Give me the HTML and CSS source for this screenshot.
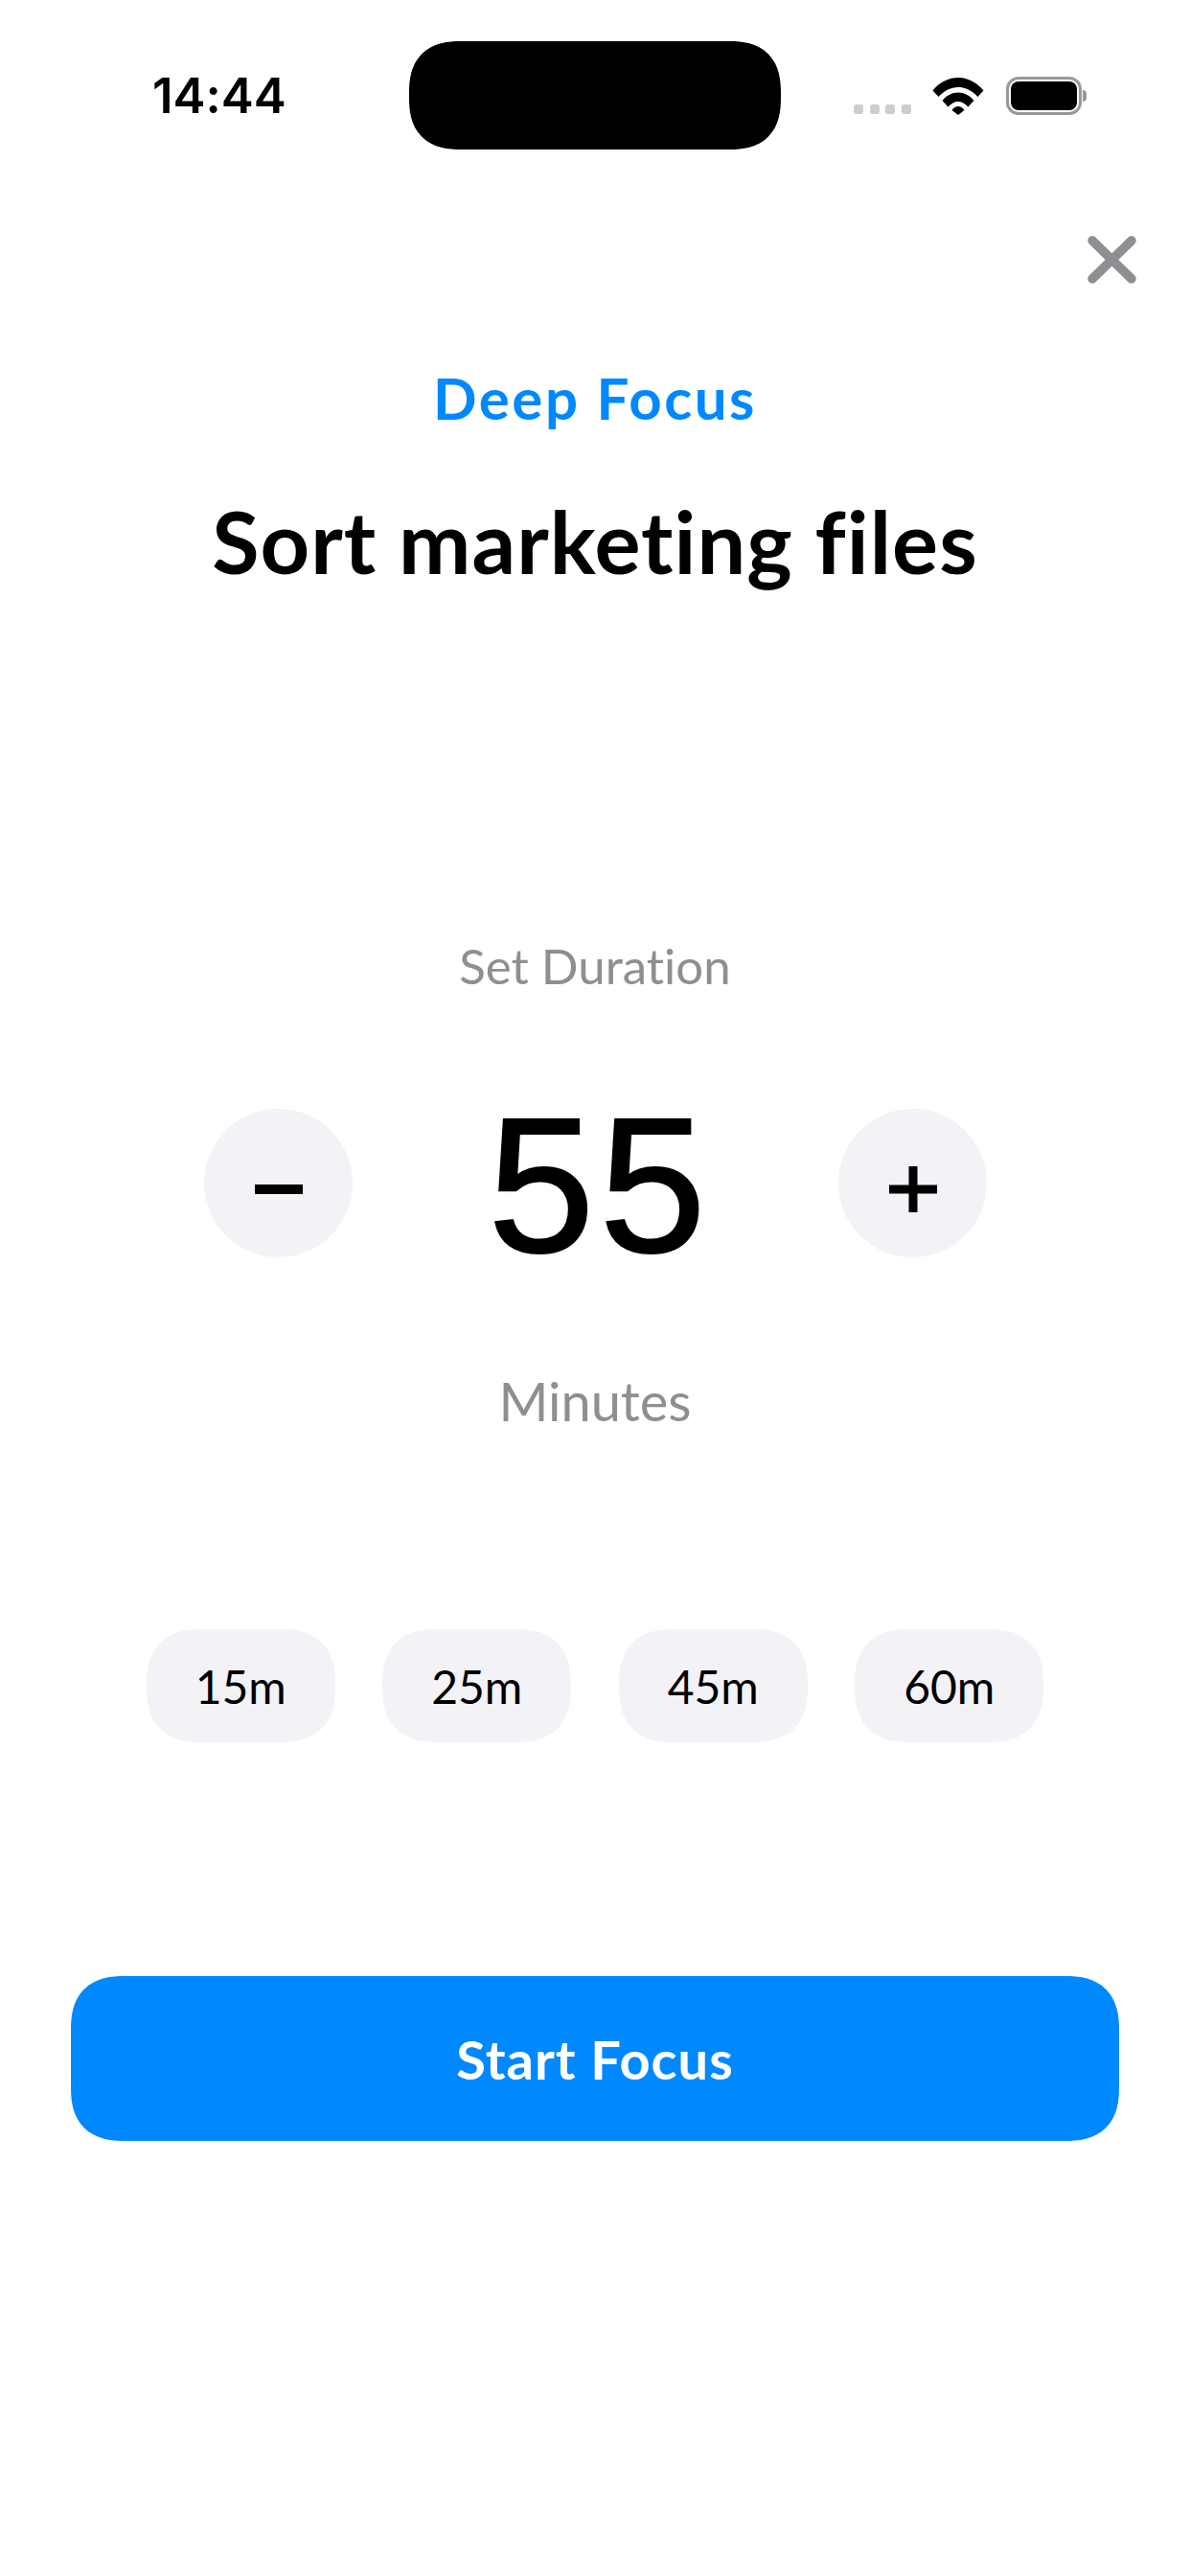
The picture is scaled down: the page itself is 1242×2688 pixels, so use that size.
FILE: index.html
```html
<!DOCTYPE html>
<html lang="en">
<head>
    <meta charset="UTF-8">
    <meta name="viewport" content="width=device-width, initial-scale=1.0">
    <title>Deep Focus</title>
    <link rel="stylesheet" href="styles.css">
</head>
<body>
    <!-- Status bar -->
    <div class="status-bar">
        <div class="time">14:44</div>
        <div class="island"></div>
        <div class="status-icons">
            <div class="signal"><span></span><span></span><span></span><span></span></div>
            <svg class="wifi" width="54" height="40" viewBox="0 0 54 40">
                <path d="M0.5 14.5 C15 -3.5 39 -3.5 53.5 14.5 L47.5 21 C35.5 7.5 18.5 7.5 6.5 21 Z" fill="#000"/>
                <path d="M10.5 25 C19.5 13.5 34.5 13.5 43.5 25 L37.5 31.5 C31 24 23 24 16.5 31.5 Z" fill="#000"/>
                <path d="M20.5 35 C24 29.5 30 29.5 33.5 35 L27 40 Z" fill="#000"/>
            </svg>
            <div class="battery"><div class="battery-fill"></div></div>
            <div class="battery-tip"></div>
        </div>
    </div>

    <div class="close-row">
        <svg width="51" height="50" viewBox="0 0 51 50">
            <path d="M5 5 L46 45 M46 5 L5 45" stroke="#8e8e93" stroke-width="9.5" stroke-linecap="round" fill="none"/>
        </svg>
    </div>

    <div class="category">Deep Focus</div>
    <h1 class="task-title">Sort marketing files</h1>

    <div class="label label-duration">Set Duration</div>
    <div class="stepper">
        <button class="step-btn" aria-label="Decrease">
            <svg width="50" height="10" viewBox="0 0 50 10"><rect width="50" height="10" fill="#000"/></svg>
        </button>
        <div class="minutes-value">55</div>
        <button class="step-btn" aria-label="Increase">
            <svg width="50" height="48" viewBox="0 0 50 48"><path d="M0 19.5 H50 V28.5 H0 Z M20.5 0 H29.5 V48 H20.5 Z" fill="#000"/></svg>
        </button>
    </div>
    <div class="label label-minutes">Minutes</div>

    <div class="presets">
        <button class="preset">15m</button>
        <button class="preset">25m</button>
        <button class="preset">45m</button>
        <button class="preset">60m</button>
    </div>

    <button class="start-btn">Start Focus</button>
</body>
</html>
```

FILE: styles.css
```css
body {
    margin: 0;
    width: 1242px;
    height: 2688px;
    overflow: hidden;
    background-color: #fff;
    color: #000;
    font-family: Lato, "Open Sans", sans-serif;
    font-variant-ligatures: none;
    text-align: center;
}
button {
    font-family: inherit;
    font-variant-ligatures: none;
    border: none;
    cursor: pointer;
    color: inherit;
}

/* Status bar */
.status-bar {
    display: grid;
    grid-template-columns: 1fr 388px 1fr;
    align-items: center;
    padding-top: 43px;
}
.time {
    padding-left: 159px;
    font-family: Inter, sans-serif;
    font-size: 51px;
    font-weight: 600;
    line-height: 60px;
    text-align: left;
}
.island {
    height: 113px;
    background-color: #000;
    border-radius: 54px;
    corner-shape: superellipse(1.3);
}
.status-icons {
    display: flex;
    align-items: flex-end;
    height: 40px;
    padding-left: 76px;
}
.signal {
    display: flex;
    gap: 6.5px;
    margin-bottom: 1px;
    margin-right: 22px;
}
.signal span {
    width: 10px;
    height: 10px;
    border-radius: 3px;
    background-color: #ccc;
}
.wifi {
    margin-right: 23px;
}
.battery {
    box-sizing: border-box;
    width: 79px;
    height: 40px;
    padding: 2px;
    border: 3px solid #999;
    border-radius: 13px;
}
.battery-fill {
    height: 100%;
    background-color: #000;
    border-radius: 8px;
}
.battery-tip {
    width: 4px;
    height: 12px;
    margin: 0 0 14px 1px;
    background-color: #999;
    border-radius: 0 6px 6px 0;
}

.close-row {
    display: flex;
    justify-content: flex-end;
    margin-top: 90px;
    padding-right: 56px;
}
.close-row svg {
    display: block;
}

.category {
    margin-top: 89px;
    font-size: 60px;
    font-weight: 700;
    letter-spacing: 2.5px;
    line-height: 60px;
    color: #0088ff;
}
.task-title {
    margin: 69px 0 0;
    font-size: 90px;
    font-weight: 700;
    letter-spacing: 1px;
    line-height: 100px;
}

.label {
    font-size: 51px;
    line-height: 60px;
    color: #8e8e93;
}
.label-duration {
    margin-top: 364px;
}
.label-minutes {
    margin-top: 118px;
    font-size: 56px;
}

.stepper {
    display: flex;
    align-items: center;
    justify-content: space-between;
    margin: 117px 212px 0 213px;
}
.step-btn {
    display: flex;
    align-items: center;
    justify-content: center;
    width: 155px;
    height: 155px;
    padding: 12px 0 0;
    background-color: #f2f2f7;
    border-radius: 50%;
}
.minutes-value {
    margin-top: 4px;
    padding-left: 8px;
    font-family: "Liberation Sans", Arial, sans-serif;
    font-size: 200px;
    letter-spacing: 5px;
    line-height: 155px;
    -webkit-text-stroke: 2px #000;
}

.presets {
    display: flex;
    justify-content: center;
    gap: 49.5px;
    margin-top: 208px;
}
.preset {
    width: 197px;
    height: 118px;
    padding: 0;
    background-color: #f2f2f7;
    border-radius: 58px;
    corner-shape: superellipse(1.3);
    font-size: 48px;
}

.start-btn {
    display: block;
    width: 1094px;
    height: 172px;
    margin: 244px 74px 0;
    background-color: #0088ff;
    border-radius: 56px;
    corner-shape: superellipse(1.3);
    color: #fff;
    font-size: 56px;
    font-weight: 700;
    letter-spacing: 1px;
}
```
